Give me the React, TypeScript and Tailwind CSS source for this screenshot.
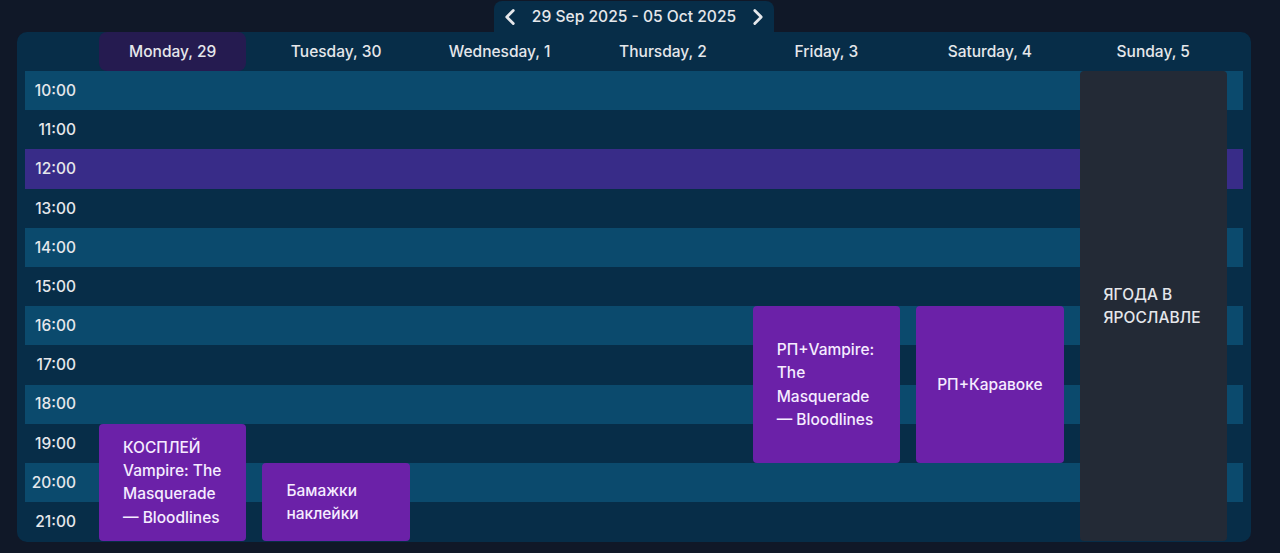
import { ChevronLeft, ChevronRight } from 'lucide-react'

const days = ['Monday, 29', 'Tuesday, 30', 'Wednesday, 1', 'Thursday, 2', 'Friday, 3', 'Saturday, 4', 'Sunday, 5']
const hours = ['10:00', '11:00', '12:00', '13:00', '14:00', '15:00', '16:00', '17:00', '18:00', '19:00', '20:00', '21:00']

const rowStarts = [
  'row-start-2', 'row-start-3', 'row-start-4', 'row-start-5', 'row-start-6', 'row-start-7',
  'row-start-8', 'row-start-9', 'row-start-10', 'row-start-11', 'row-start-12', 'row-start-13',
]

export default function App() {
  const rowColor = (i: number) => {
    if (i === 2) return 'bg-[#382c88]'
    return i % 2 === 0 ? 'bg-[#0b4a6d]' : 'bg-[#072d48]'
  }

  const eventCls =
    'z-10 flex items-center justify-center rounded-[4px] px-6 text-[15.5px] leading-[23.4px] font-medium'

  return (
    <div className="min-h-[553px] bg-[#101828] font-['Inter',sans-serif] text-[15.5px] text-[#e5e7eb]">
      {/* Week switcher */}
      <div className="flex justify-center pt-[1px] pr-[12px]">
        <div className="flex h-[31px] items-center gap-[9px] rounded-t-lg bg-[#072d48] px-[3px] text-[15.6px] font-medium text-[#e5e7eb]">
          <ChevronLeft className="h-[26px] w-[26px]" strokeWidth={2.6} />
          <span>29 Sep 2025 - 05 Oct 2025</span>
          <ChevronRight className="h-[26px] w-[26px]" strokeWidth={2.6} />
        </div>
      </div>

      <div className="ml-[17px] mr-[29px] rounded-[10px] bg-[#072d48] px-2 pb-[1px]">
        <div className="grid grid-cols-[58px_repeat(7,minmax(0,1fr))_0px] grid-rows-[39px_repeat(12,39.2px)] gap-x-4 font-medium">
          {/* Header */}
          <div className="col-start-1 row-start-1" />
          {days.map((d, i) => (
            <div
              key={d}
              className={`row-start-1 flex items-center justify-center ${i === 0 ? 'rounded-lg bg-[#251b50]' : ''}`}
            >
              {d}
            </div>
          ))}

          {/* Hour rows */}
          {hours.map((h, i) => (
            <div key={h} className={`${rowStarts[i]} col-span-full flex items-center ${rowColor(i)}`}>
              <span className="w-[51px] text-right">{h}</span>
            </div>
          ))}

          {/* Events */}
          <div className={`col-start-2 row-start-11 row-span-3 bg-[#6b21a8] text-[#f5ecff] ${eventCls}`}>
            <div>
              КОСПЛЕЙ
              <br />
              Vampire: The Masquerade — Bloodlines
            </div>
          </div>
          <div className={`col-start-3 row-start-12 row-span-2 bg-[#6b21a8] text-[#f5ecff] ${eventCls}`}>
            <div>Бамажки наклейки</div>
          </div>
          <div className={`col-start-6 row-start-8 row-span-4 bg-[#6b21a8] text-[#f5ecff] ${eventCls}`}>
            <div>РП+Vampire: The Masquerade — Bloodlines</div>
          </div>
          <div className={`col-start-7 row-start-8 row-span-4 bg-[#6b21a8] text-[#f5ecff] ${eventCls}`}>
            <div className="whitespace-nowrap">РП+Каравоке</div>
          </div>
          <div className={`col-start-8 row-start-2 row-span-12 bg-[#232a36] text-[#e5e7eb] ${eventCls}`}>
            <div>ЯГОДА В ЯРОСЛАВЛЕ</div>
          </div>
        </div>
      </div>
    </div>
  )
}
